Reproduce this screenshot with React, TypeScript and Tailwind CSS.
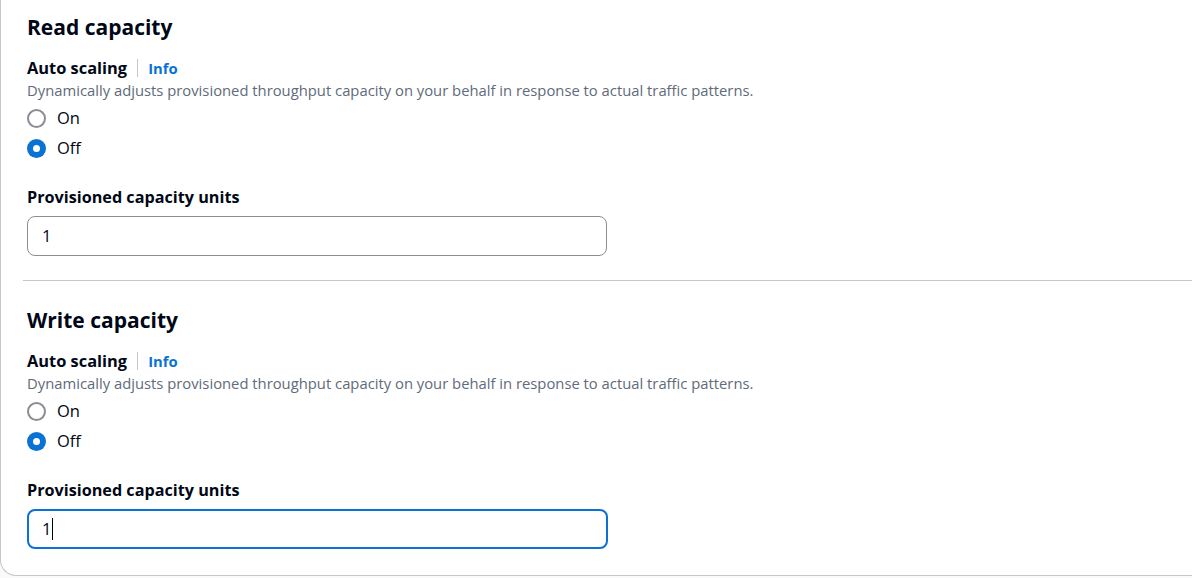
import { useState } from "react";

const font = { fontFamily: '"Open Sans", "Noto Sans", Arial, sans-serif' };

const Radio = ({ checked, label }: { checked: boolean; label: string }) => (
  <label className="flex h-[30px] items-center gap-[11px]">
    {checked ? (
      <span className="flex h-[19px] w-[19px] items-center justify-center rounded-full bg-[#0972d3]">
        <span className="h-[7px] w-[7px] rounded-full bg-white" />
      </span>
    ) : (
      <span className="h-[19px] w-[19px] rounded-full border-2 border-[#8c8c94] bg-white" />
    )}
    <span className="text-[16.5px] text-[#000716]">{label}</span>
  </label>
);

const CapacitySection = ({ title, focused }: { title: string; focused?: boolean }) => (
  <div className="flex flex-col">
    <h2 className="h-[34px] text-[21px] font-bold leading-[34px] text-[#000716]">{title}</h2>
    <div className="mt-[13px] flex h-[22px] items-center">
      <span className="text-[16.4px] font-bold text-[#000716]">Auto scaling</span>
      <span className="mx-[10px] h-[18px] w-px bg-[#c6c6cd]" />
      <span className="text-[14.8px] font-bold text-[#0972d3]">Info</span>
    </div>
    <p className="h-[22px] text-[14.8px] leading-[22px] text-[#5f6b7a]">
      Dynamically adjusts provisioned throughput capacity on your behalf in response to actual traffic patterns.
    </p>
    <div className="mt-[2px] flex flex-col">
      <Radio checked={false} label="On" />
      <Radio checked label="Off" />
    </div>
    <div className="mt-[23px] h-[22px] text-[16.2px] font-bold leading-[22px] text-[#000716]">
      Provisioned capacity units
    </div>
    <div
      className={
        focused
          ? "mt-[8px] flex h-[40px] w-[581px] items-center rounded-[8px] border-2 border-[#0972d3] px-[13px]"
          : "mt-[8px] flex h-[40px] w-[580px] items-center rounded-[8px] border border-[#8c8c94] px-[14px]"
      }
    >
      <span className="text-[16.5px] text-[#000716]">1</span>
      {focused && <span className="ml-px h-[22px] w-px bg-black" />}
    </div>
  </div>
);

export default function App() {
  const [, setX] = useState(0);
  void setX;
  return (
    <div className="h-[578px] w-[1192px] overflow-hidden bg-[#fafafa]" style={font}>
      <div className="flex flex-col rounded-bl-[16px] border-b border-l border-[#c6c6cd] bg-white pb-[26px]">
        <div className="pl-[26px] pt-[10px]">
          <CapacitySection title="Read capacity" />
        </div>
        <div className="ml-[22px] mt-[24px] h-px bg-[#c6c6cd]" />
        <div className="pl-[26px] pt-[22px]">
          <CapacitySection title="Write capacity" focused />
        </div>
      </div>
    </div>
  );
}
